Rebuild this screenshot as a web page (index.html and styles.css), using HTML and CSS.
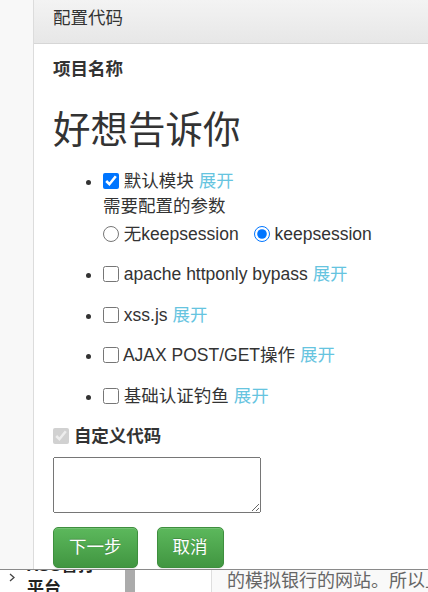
FILE: index.html
```html
<!DOCTYPE html>
<html lang="zh-CN">
<head>
<meta charset="utf-8">
<title>配置代码</title>
<link rel="stylesheet" href="styles.css">
</head>
<body>
<div class="page">
  <div class="gutter"></div>
  <div class="modal">
    <div class="modal-header">配置代码</div>
    <div class="modal-body">
      <div class="label-strong">项目名称</div>
      <h2 class="project">好想告诉你</h2>
      <ul class="modules">
        <li>
          <div class="line"><label><input type="checkbox" checked> 默认模块</label> <a class="toggle">展开</a></div>
          <div class="line">需要配置的参数</div>
          <div class="radios">
            <label><input type="radio" name="ks"> 无keepsession</label>
            <label><input type="radio" name="ks" checked> keepsession</label>
          </div>
        </li>
        <li><div class="line"><label><input type="checkbox"> apache httponly bypass</label> <a class="toggle">展开</a></div></li>
        <li><div class="line"><label><input type="checkbox"> xss.js</label> <a class="toggle">展开</a></div></li>
        <li><div class="line"><label><input type="checkbox"> AJAX POST/GET操作</label> <a class="toggle">展开</a></div></li>
        <li><div class="line"><label><input type="checkbox"> 基础认证钓鱼</label> <a class="toggle">展开</a></div></li>
      </ul>
      <div class="custom"><input type="checkbox" checked disabled> <span>自定义代码</span></div>
      <textarea class="code"></textarea>
      <div class="actions">
        <button class="btn">下一步</button>
        <button class="btn">取消</button>
      </div>
    </div>
  </div>
</div>
<div class="strip">
  <div class="nav">
    <svg class="chev" width="6" height="9" viewBox="0 0 6 9"><polyline points="1,1 5,4.5 1,8" fill="none" stroke="#444" stroke-width="1.3"/></svg>
    <div class="nav-title">XSS盲打<br>平台</div>
  </div>
  <div class="scroll"></div>
  <div class="blank"></div>
  <div class="article">的模拟银行的网站。所以上面</div>
</div>
</body>
</html>
```

FILE: styles.css
```css
html, body {
  margin: 0;
  padding: 0;
  background: #fff;
}
body {
  font-family: "Liberation Sans", "Noto Sans CJK SC", sans-serif;
  font-size: 17.5px;
  line-height: 25px;
  color: #333;
  width: 428px;
  height: 592px;
  overflow: hidden;
}
.page {
  display: flex;
  height: 569px;
  overflow: hidden;
}
.gutter {
  width: 33px;
  flex: none;
  background: #f8f8f8;
}
.modal {
  flex: 1;
  border-left: 1px solid #dcdcdc;
  background: #fff;
  min-width: 0;
}
.modal-header {
  height: 44px;
  box-sizing: border-box;
  padding: 6px 19px 0;
  background: linear-gradient(to bottom, #f3f3f3, #e7e7e7);
  border-bottom: 1px solid #d6d6d6;
}
.modal-body {
  padding: 13px 19px 0;
}
.label-strong {
  font-weight: bold;
}
.project {
  font-size: 37.5px;
  line-height: 41px;
  font-weight: normal;
  margin: 28px 0 0;
}
.modules {
  margin: 18px 0 0;
  padding-left: 50px;
}
.modules li {
  margin-bottom: 15.5px;
}
.modules li:last-child {
  margin-bottom: 15px;
}
.line {
  height: 25px;
}
input[type="checkbox"],
input[type="radio"] {
  width: 16px;
  height: 16px;
  margin: 0;
  vertical-align: -2px;
}
.toggle {
  color: #66c4df;
  cursor: pointer;
}
.radios {
  display: flex;
  gap: 15px;
  padding-top: 2.5px;
  height: 25px;
}
.custom {
  font-weight: bold;
  height: 25px;
}
.code {
  display: block;
  margin: 8px 0 0;
  width: 208px;
  height: 56px;
  box-sizing: border-box;
}
.actions {
  display: flex;
  gap: 19px;
  margin-top: 14px;
}
.btn {
  font-family: inherit;
  font-size: 17.5px;
  line-height: 25px;
  padding: 7px 15px;
  color: #fff;
  border: 1px solid #3e8f3e;
  border-radius: 5px;
  background: linear-gradient(to bottom, #5cb85c 0%, #419641 100%);
  text-shadow: 0 -1px 0 rgba(0, 0, 0, 0.2);
  box-shadow: inset 0 1px 0 rgba(255, 255, 255, 0.15), 0 1px 1px rgba(0, 0, 0, 0.075);
}
.strip {
  display: flex;
  height: 23px;
  box-sizing: border-box;
  border-top: 1px solid #8a8a8a;
  overflow: hidden;
}
.nav {
  width: 125px;
  flex: none;
  display: flex;
  background: #fff;
}
.chev {
  margin: 3px 0 0 9px;
  flex: none;
}
.nav-title {
  margin: -16px 0 0 12px;
  font-size: 17px;
  line-height: 23px;
  font-weight: bold;
  color: #222;
}
.scroll {
  width: 10px;
  flex: none;
  background: #ababab;
}
.blank {
  width: 76px;
  flex: none;
  background: #fff;
}
.article {
  flex: 1;
  border-left: 1px solid #dedede;
  background: #f9f9f9;
  padding-left: 15px;
  font-family: "Liberation Serif", "Noto Sans CJK SC", serif;
  font-size: 18px;
  line-height: 22px;
  color: #666;
  white-space: nowrap;
  overflow: hidden;
}
```
